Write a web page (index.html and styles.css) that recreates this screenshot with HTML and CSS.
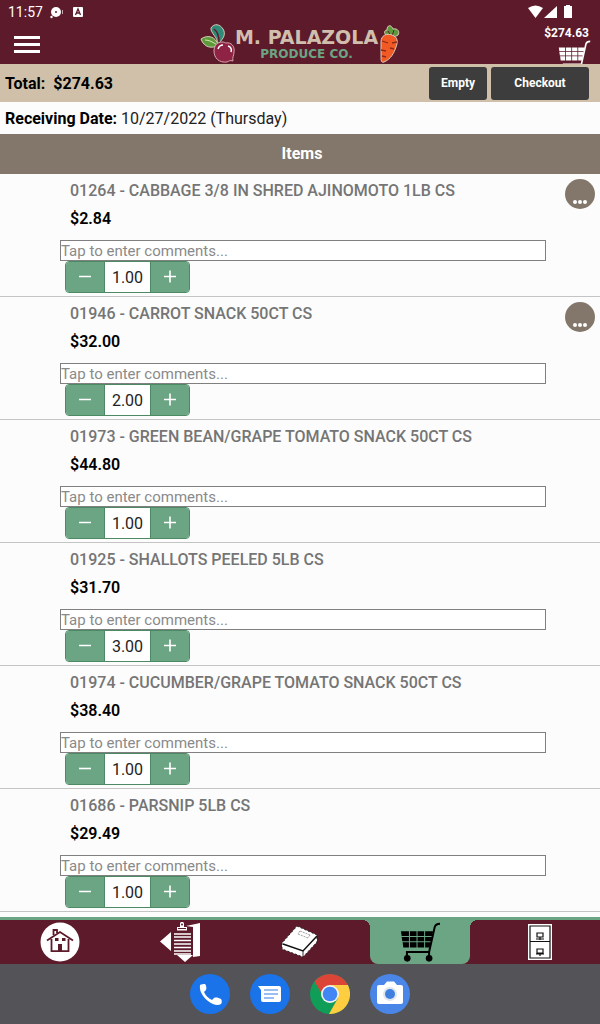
FILE: index.html
```html
<!DOCTYPE html>
<html lang="en">
<head>
    <meta charset="UTF-8">
    <meta name="viewport" content="width=device-width, initial-scale=1.0">
    <title>M. Palazola Produce Co. - Cart</title>
    <link rel="stylesheet" href="styles.css">
</head>
<body>

<!-- shared icons -->
<svg class="sprite" aria-hidden="true">
    <symbol id="cart" viewBox="118 50 124 124">
        <path d="M121 78h24v14h-22zM148 78h20v14h-20zM171 78h20v14h-20zM194 78h24l-3 14h-21zM123 95h22v13h-20zM148 95h20v13h-20zM171 95h20v13h-20zM194 95h21l-3 13h-18zM126 111h19v16h-17zM148 111h20v16h-20zM171 111h20v16h-20zM194 111h17l-4 16h-13z"/>
        <path d="M239 55c-10 0-14 3-16 10l-17 76h-67v14" fill="none" stroke="currentColor" stroke-width="6"/>
        <path d="M206 141v14" stroke="currentColor" stroke-width="6"/>
        <circle cx="140" cy="160" r="10"/>
        <circle cx="206" cy="160" r="10"/>
    </symbol>
    <symbol id="minus" viewBox="0 0 14 14">
        <path d="M1 6.500h12" stroke="currentColor" stroke-width="1.600"/>
    </symbol>
    <symbol id="plus" viewBox="0 0 14 14">
        <path d="M1 6.500h12M7 .500v12" stroke="currentColor" stroke-width="1.600"/>
    </symbol>
</svg>

<div class="status-bar">
    <span class="clock">11:57</span>
    <svg width="14" height="14" viewBox="0 0 14 14" fill="#fff">
        <circle cx="6" cy="7" r="5"/>
        <circle cx="1.500" cy="12" r="1.200"/>
        <path d="M12.500 5v4" stroke="#c9a5b0"/>
        <path d="M5 7h2M6 6v2" stroke="#5c1a2b"/>
    </svg>
    <svg class="status-app" width="10" height="10" viewBox="0 0 10 10">
        <rect width="10" height="10" rx="1" fill="#fff"/>
        <path d="M2.500 8L5 2l2.500 6M3.500 6h3" fill="none" stroke="#5c1a2b" stroke-width="1.300"/>
    </svg>
    <svg class="status-signals" width="46" height="14" viewBox="0 0 46 14" fill="#fff">
        <path d="M1 3Q8.500-2 16 3L8.500 13z"/>
        <path d="M30 1v12H17z"/>
        <path d="M37 1h2V0h4v1h2v12h-8z"/>
    </svg>
</div>

<header class="header">
    <button class="menu-button" aria-label="Menu"><span></span><span></span><span></span></button>
    <div class="logo">
        <svg width="35" height="40" viewBox="0 0 35 40">
            <path d="M17 20C19 14 10 9 11 4c3-5 9-4 12 1 3 5 1 9-5 15" fill="#2f8a78" stroke="#d9cdb8" stroke-width="1"/>
            <path d="M14 5c4 3 5 8 5 13" fill="none" stroke="#5c1a2b" stroke-width="1.500"/>
            <path d="M18 21C13 25 4 24 1 15c7-5 15-2 17 6z" fill="#5d9a3c" stroke="#d9cdb8" stroke-width="1"/>
            <path d="M5 16c4 0 8 2 12 5" fill="none" stroke="#d7e0a8"/>
            <path d="M33 37c-3-1-4 0-6 1-8 1-13-4-13-11 0-6 4-9 8-9 3 0 3 1 4 1 5-1 9 3 8 9 0 4-2 5-1 9z" fill="#8f2346" stroke="#d9a5a8" stroke-width="1"/>
            <path d="M18 25c1-3 3-4 5-4M28 22c3 1 4 3 3 6" fill="none" stroke="#fff" stroke-width="1.500"/>
        </svg>
        <div class="logo-text">
            <span class="logo-name">M. PALAZOLA</span>
            <span class="logo-sub">PRODUCE CO.</span>
        </div>
        <svg width="22" height="40" viewBox="0 0 22 40">
            <path d="M10 12C5 10 6 6 9 6c0-5 4-6 6-1 5-1 7 3 5 6-3 2-7 3-10 1z" fill="#5d9a3c" stroke="#d9cdb8" stroke-width="1"/>
            <path d="M10 7l3 5M16 6l-2 6" stroke="#5c1a2b"/>
            <path d="M3 18c0-7 6-9 11-7 6 2 6 7 4 12-2 6-5 12-12 15-3 1-3-2-3-5z" fill="#f15a24" stroke="#d9cdb8" stroke-width="1"/>
            <path d="M4 17l6 2M19 18l-5 1M3 26l5 1M16 25l-4-1M4 32l4 1" stroke="#8c2a1c" stroke-width="1.300"/>
        </svg>
    </div>
    <a class="header-cart" href="#cart-page">
        <span>$274.63</span>
        <svg width="33" height="33"><use href="#cart"/></svg>
    </a>
</header>

<div class="total-bar">
    <span class="total">Total:&nbsp; $274.63</span>
    <button class="dark-button">Empty</button>
    <button class="dark-button checkout">Checkout</button>
</div>

<div class="date-bar"><b>Receiving Date:</b> 10/27/2022 (Thursday)</div>

<h1 class="items-title">Items</h1>

<main class="items">
    <section class="item">
        <h2>01264 - CABBAGE 3/8 IN SHRED AJINOMOTO 1LB CS</h2>
        <p class="price">$2.84</p>
        <input class="comments" type="text" placeholder="Tap to enter comments..." aria-label="Comments">
        <div class="stepper">
            <button aria-label="Less"><svg width="14" height="14"><use href="#minus"/></svg></button>
            <input type="text" value="1.00" aria-label="Quantity">
            <button aria-label="More"><svg width="14" height="14"><use href="#plus"/></svg></button>
        </div>
        <button class="more" aria-label="Options"><i></i><i></i><i></i></button>
    </section>
    <section class="item">
        <h2>01946 - CARROT SNACK 50CT CS</h2>
        <p class="price">$32.00</p>
        <input class="comments" type="text" placeholder="Tap to enter comments..." aria-label="Comments">
        <div class="stepper">
            <button aria-label="Less"><svg width="14" height="14"><use href="#minus"/></svg></button>
            <input type="text" value="2.00" aria-label="Quantity">
            <button aria-label="More"><svg width="14" height="14"><use href="#plus"/></svg></button>
        </div>
        <button class="more" aria-label="Options"><i></i><i></i><i></i></button>
    </section>
    <section class="item">
        <h2>01973 - GREEN BEAN/GRAPE TOMATO SNACK 50CT CS</h2>
        <p class="price">$44.80</p>
        <input class="comments" type="text" placeholder="Tap to enter comments..." aria-label="Comments">
        <div class="stepper">
            <button aria-label="Less"><svg width="14" height="14"><use href="#minus"/></svg></button>
            <input type="text" value="1.00" aria-label="Quantity">
            <button aria-label="More"><svg width="14" height="14"><use href="#plus"/></svg></button>
        </div>
    </section>
    <section class="item">
        <h2>01925 - SHALLOTS PEELED 5LB CS</h2>
        <p class="price">$31.70</p>
        <input class="comments" type="text" placeholder="Tap to enter comments..." aria-label="Comments">
        <div class="stepper">
            <button aria-label="Less"><svg width="14" height="14"><use href="#minus"/></svg></button>
            <input type="text" value="3.00" aria-label="Quantity">
            <button aria-label="More"><svg width="14" height="14"><use href="#plus"/></svg></button>
        </div>
    </section>
    <section class="item">
        <h2>01974 - CUCUMBER/GRAPE TOMATO SNACK 50CT CS</h2>
        <p class="price">$38.40</p>
        <input class="comments" type="text" placeholder="Tap to enter comments..." aria-label="Comments">
        <div class="stepper">
            <button aria-label="Less"><svg width="14" height="14"><use href="#minus"/></svg></button>
            <input type="text" value="1.00" aria-label="Quantity">
            <button aria-label="More"><svg width="14" height="14"><use href="#plus"/></svg></button>
        </div>
    </section>
    <section class="item">
        <h2>01686 - PARSNIP 5LB CS</h2>
        <p class="price">$29.49</p>
        <input class="comments" type="text" placeholder="Tap to enter comments..." aria-label="Comments">
        <div class="stepper">
            <button aria-label="Less"><svg width="14" height="14"><use href="#minus"/></svg></button>
            <input type="text" value="1.00" aria-label="Quantity">
            <button aria-label="More"><svg width="14" height="14"><use href="#plus"/></svg></button>
        </div>
    </section>
</main>

<nav class="tabs">
    <a class="tab" href="#home" aria-label="Home">
        <svg width="40" height="40" viewBox="0 0 40 40">
            <circle cx="20" cy="20" r="19.500" fill="#fff"/>
            <path d="M7 18.500L20 10l13 8.500M13.500 13V8h3.500v3M11.500 17v12.200h17V17" fill="none" stroke="#5c1a2b" stroke-width="1.800"/>
            <path d="M15 16h3.500v3H15zM22 16h3.500v3H22zM18 22h4v7h-4z" fill="#5c1a2b"/>
        </svg>
    </a>
    <a class="tab" href="#orders" aria-label="Orders">
        <svg width="40" height="40" viewBox="0 0 40 40" fill="#fff">
            <path d="M0 19.500L11 10v19zM17 33h16l-8 7zM26 4l14-3v33l-7 1V5z"/>
            <path d="M13 8h20v25H13z" fill="#5c1a2b"/>
            <path d="M14 12h17M14 15h17M14 18.500h17M14 22h17M14 25.500h17M14 29h17M14 32h17" stroke="#fff" stroke-width="1.300"/>
            <path d="M17 5h3V2c0-3 4-3 4 0v3h3v3.500H17z"/>
            <circle cx="22" cy="2.500" r="1" fill="#5c1a2b"/>
            <path d="M18 6.500h8" stroke="#5c1a2b"/>
        </svg>
    </a>
    <a class="tab" href="#catalog" aria-label="Catalog">
        <svg width="38" height="34" viewBox="0 0 38 34">
            <path d="M16 1L36 10v7L22 32 1 24v-6z" fill="#fff" stroke="#222" stroke-width="1" stroke-dasharray="2 2"/>
            <path d="M2 19l20 7 14-15" fill="none" stroke="#111" stroke-width="1.500"/>
            <path d="M22 26v6" stroke="#333" stroke-width="1"/>
            <path d="M19 6l10 4M17 9l10 4M19 6l-2 3M29 10l-2 3" stroke="#888" stroke-width=".800" stroke-dasharray="2 1"/>
        </svg>
    </a>
    <a class="tab active" href="#cart-page" aria-label="Cart">
        <svg width="41" height="41"><use href="#cart"/></svg>
    </a>
    <a class="tab" href="#files" aria-label="Files">
        <svg width="26" height="38" viewBox="0 0 26 38">
            <path d="M1 1h24v36H1z" fill="#fff"/>
            <path d="M3 3h20v32H3zM3 18.500h20" fill="none" stroke="#111" stroke-width="1.200"/>
            <path d="M10 10h6v4h-6zM9 16h8M13 14v3M10 26h6v4h-6zM9 31h8M13 30v3" fill="none" stroke="#111" stroke-width="1.200"/>
        </svg>
    </a>
</nav>

<div class="dock">
    <button aria-label="Phone">
        <svg width="40" height="40" viewBox="0 0 40 40">
            <circle cx="20" cy="20" r="20" fill="#1a73e8"/>
            <path d="M10 11c1-1 4-1 5-1 1 1 2 4 1 6l-2 2c2 4 4 6 8 8l2-2c2-1 5 0 7 1 1 1 1 4 0 5-3 2-8 1-13-3-5-4-9-10-8-16z" fill="#fff"/>
        </svg>
    </button>
    <button aria-label="Messages">
        <svg width="40" height="40" viewBox="0 0 40 40">
            <circle cx="20" cy="20" r="20" fill="#1a73e8"/>
            <path d="M8 12h21a2 2 0 0 1 2 2v12a2 2 0 0 1-2 2H13a2 2 0 0 1-2-2V16z" fill="#fff"/>
            <path d="M14 16h14M14 20h14M14 24h10" stroke="#7ba9ee" stroke-width="1.500"/>
        </svg>
    </button>
    <button aria-label="Chrome">
        <svg width="40" height="40" viewBox="0 0 40 40">
            <circle cx="20" cy="20" r="20" fill="#0f9d58"/>
            <path d="M20 11H37.900A20 20 0 0 1 19 40L28 24z" fill="#ffcd40"/>
            <path d="M4.500 7.500L12 20 20 11h17.900A20 20 0 0 0 4.500 7.500z" fill="#db4437"/>
            <circle cx="20" cy="20" r="9" fill="#f1f1f1"/>
            <circle cx="20" cy="20" r="7.300" fill="#4285f4"/>
        </svg>
    </button>
    <button aria-label="Camera">
        <svg width="40" height="40" viewBox="0 0 40 40">
            <circle cx="20" cy="20" r="20" fill="#4a86e8"/>
            <path d="M9 11h5l3-3.500h7l3 3.500h4a2 2 0 0 1 2 2v15a2 2 0 0 1-2 2H9a2 2 0 0 1-2-2V13a2 2 0 0 1 2-2z" fill="#fff"/>
            <circle cx="20" cy="20" r="7" fill="#dfe6ee"/>
            <circle cx="20" cy="20" r="5" fill="#3f7fe0"/>
        </svg>
    </button>
</div>

</body>
</html>
```
FILE: styles.css
```css
* {
    box-sizing: border-box;
}

body {
    font-family: Roboto, Arial, sans-serif;
    font-size: 16px;
    background-color: #fcfcfc;
    margin: 0;
    height: 100vh;
    display: flex;
    flex-direction: column;
    color: #000;
}

button,
input {
    font-family: inherit;
    padding: 0;
    border: none;
}

button {
    cursor: pointer;
}

svg {
    display: block;
}

.sprite {
    display: none;
}

.status-bar {
    height: 24px;
    padding: 0 27px 0 8px;
    display: flex;
    align-items: center;
    background-color: #5c1a2b;
    color: #fff;
}

.clock {
    font-size: 14px;
    margin-right: 7px;
}

.status-app {
    margin-left: 9px;
}

.status-signals {
    margin-left: auto;
}

.header {
    height: 40px;
    padding: 0 9px;
    display: grid;
    grid-template-columns: 1fr auto 1fr;
    background-color: #5c1a2b;
    overflow: hidden;
}

.menu-button {
    width: 26px;
    height: 17px;
    margin: 12px 0 0 5px;
    display: flex;
    flex-direction: column;
    justify-content: space-between;
    background: none;
}

.menu-button span {
    width: 26px;
    height: 3px;
    background-color: #fff;
}

.logo {
    display: flex;
}

.logo-text {
    display: flex;
    flex-direction: column;
    align-items: center;
    padding-top: 3px;
    font-family: "DejaVu Sans", sans-serif;
    font-weight: bold;
}

.logo-name {
    font-size: 19px;
    line-height: 20px;
    color: #d1bfae;
}

.logo-sub {
    font-size: 12px;
    line-height: 14px;
    color: #6ba583;
}

.header-cart {
    justify-self: end;
    display: flex;
    flex-direction: column;
    align-items: flex-end;
    color: #fff;
    fill: #fff;
    font-size: 12px;
    font-weight: bold;
    line-height: 14px;
    padding-top: 2px;
    text-decoration: none;
}

.header-cart span {
    margin-right: 2px;
}

.total-bar {
    height: 38px;
    padding: 0 11px 0 5px;
    display: flex;
    align-items: center;
    gap: 4px;
    background-color: #d0c0aa;
}

.total {
    flex: 1;
    font-weight: bold;
}

.dark-button {
    width: 58px;
    height: 33px;
    border-radius: 3px;
    background-color: #3d3d3d;
    color: #fff;
    font-size: 12px;
    font-weight: bold;
}

.checkout {
    width: 98px;
}

.date-bar {
    height: 32px;
    line-height: 33px;
    padding-left: 5px;
    color: #222;
}

.date-bar b {
    color: #000;
}

.items-title {
    margin: 0;
    padding-left: 4px;
    background-color: #82776a;
    color: #fff;
    font-size: 16px;
    font-weight: bold;
    line-height: 40px;
    text-align: center;
}

.items {
    flex: 1;
    min-height: 0;
    overflow: hidden;
}

.item {
    position: relative;
    height: 123px;
    padding: 3px 54px 0 60px;
    border-bottom: 1px solid #c4c4c4;
}

.item h2 {
    margin: 0 0 0 10px;
    color: #757575;
    font-size: 16px;
    font-weight: 500;
    line-height: 28px;
    white-space: nowrap;
}

.price {
    margin: 0 0 7px 10px;
    font-weight: 600;
    line-height: 28px;
}

.comments {
    display: block;
    width: 100%;
    height: 21px;
    border: 1px solid #808080;
    background-color: #fff;
    font-size: 15px;
}

.comments::placeholder {
    color: #8a8a8a;
}

.stepper {
    display: flex;
    width: 125px;
    height: 32px;
    margin-left: 5px;
    border: 1px solid #4b8a63;
    border-radius: 4px;
    overflow: hidden;
}

.stepper button {
    width: 39px;
    display: flex;
    align-items: center;
    justify-content: center;
    background-color: #6ba583;
    color: #fff;
}

.stepper button:first-child {
    border-right: 1px solid #4b8a63;
}

.stepper button:last-child {
    border-left: 1px solid #4b8a63;
}

.stepper input {
    flex: 1;
    min-width: 0;
    background-color: #fff;
    color: #222;
    font-size: 16px;
    text-align: center;
}

.more {
    position: absolute;
    top: 5px;
    right: 5px;
    width: 30px;
    height: 30px;
    padding-top: 15px;
    border-radius: 50%;
    display: flex;
    align-items: center;
    justify-content: center;
    gap: 1px;
    background-color: #82776a;
}

.more i {
    width: 4px;
    height: 4px;
    border-radius: 50%;
    background-color: #fff;
}

.tabs {
    display: flex;
    height: 47px;
    border-top: 3px solid #6ba583;
    background-color: #5c1a2b;
}

.tab {
    position: relative;
    flex: 1;
    margin: 0 10px;
    display: flex;
    align-items: center;
    justify-content: center;
    color: #000;
}

.tab.active {
    background-color: #6ba583;
    border-radius: 0 0 8px 8px;
}

/* curves joining the active tab to the top line */
.tab.active::before,
.tab.active::after {
    content: "";
    position: absolute;
    top: 0;
    width: 8px;
    height: 8px;
}

.tab.active::before {
    left: -8px;
    background: radial-gradient(circle at 0 100%, transparent 8px, #6ba583 8px);
}

.tab.active::after {
    right: -8px;
    background: radial-gradient(circle at 100% 100%, transparent 8px, #6ba583 8px);
}

.dock {
    height: 60px;
    display: flex;
    align-items: center;
    justify-content: center;
    gap: 20px;
    background-color: #545357;
}

.dock button {
    background: none;
}
```
